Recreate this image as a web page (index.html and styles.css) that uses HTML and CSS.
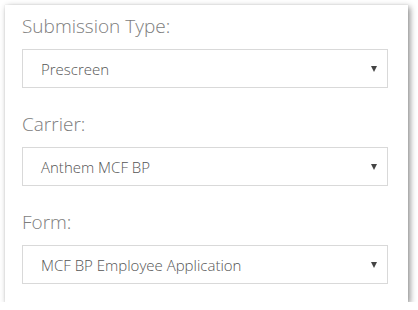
FILE: index.html
```html
<!DOCTYPE html>
<html>
<head>
<meta charset="utf-8">
<link rel="stylesheet" href="styles.css">
</head>
<body>
<div class="card">
  <div class="field">
    <label class="label">Submission Type:</label>
    <div class="select"><span class="value">Prescreen</span><span class="arrow"></span></div>
  </div>
  <div class="field">
    <label class="label">Carrier:</label>
    <div class="select"><span class="value">Anthem MCF BP</span><span class="arrow"></span></div>
  </div>
  <div class="field">
    <label class="label">Form:</label>
    <div class="select"><span class="value">MCF BP Employee Application</span><span class="arrow"></span></div>
  </div>
</div>
</body>
</html>
```

FILE: styles.css
```css
html, body {
  margin: 0;
  padding: 0;
  background: #ffffff;
}
body {
  font-family: "Open Sans", "Noto Sans", sans-serif;
}
.card {
  margin: 5px 0 0 5px;
  width: 403px;
  height: 297px;
  box-sizing: border-box;
  background: #ffffff;
  box-shadow: 2px 2px 6px rgba(0, 0, 0, 0.45), 0 0 1px rgba(0, 0, 0, 0.12);
  padding: 8px 20px 0 17px;
}
.field {
  margin-bottom: 23px;
}
.label {
  display: block;
  font-size: 19px;
  line-height: 26px;
  font-weight: 300;
  color: #7d7d7d;
  margin-bottom: 10px;
}
.select {
  height: 39px;
  box-sizing: border-box;
  border: 1px solid #d9d9d9;
  display: flex;
  align-items: center;
  justify-content: space-between;
  padding: 0 10px 0 18px;
}
.value {
  font-size: 15px;
  font-weight: 300;
  color: #555555;
}
.arrow {
  width: 0;
  height: 0;
  border-left: 3.5px solid transparent;
  border-right: 3.5px solid transparent;
  border-top: 6px solid #444444;
}
```
